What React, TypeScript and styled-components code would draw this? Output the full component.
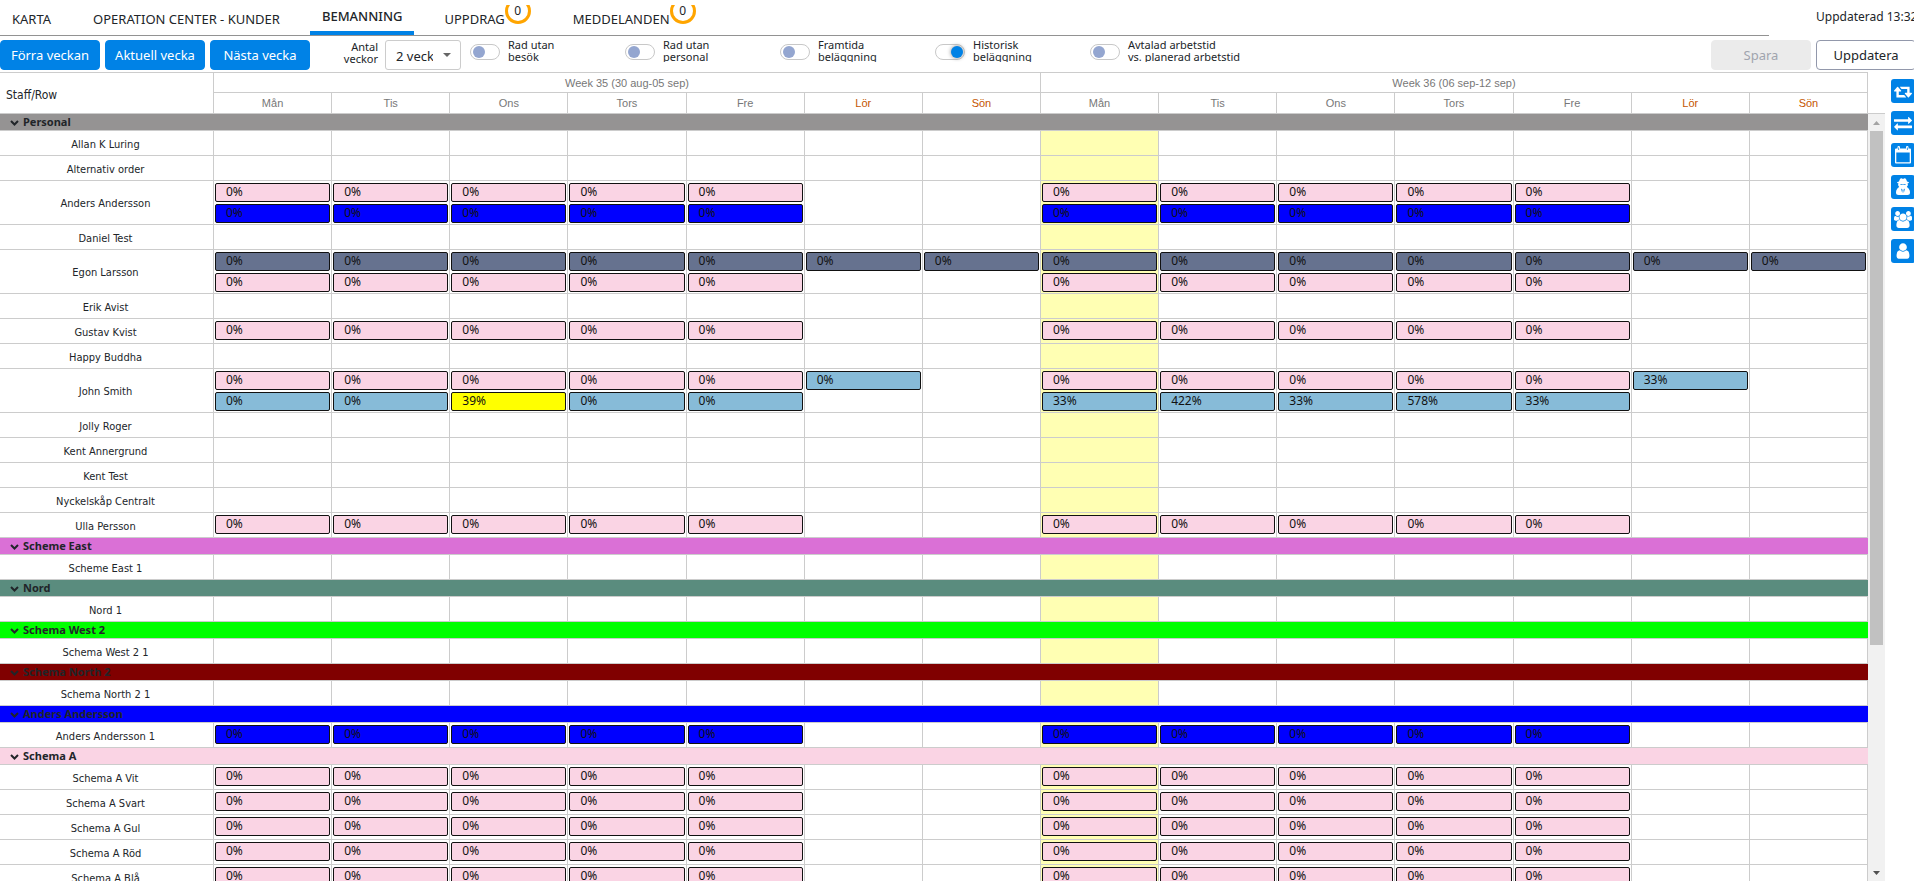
import React from 'react';
import styled, { createGlobalStyle, css } from 'styled-components';

const Global = createGlobalStyle`
  *, *::before, *::after { box-sizing: border-box; }
  html, body { margin: 0; height: 100%; background: #fff; overflow: hidden; }
  #root { height: 100%; }
  body, button, select, input { font-family: "Noto Sans", "Open Sans", sans-serif; color: #212529; }
`;

const Page = styled.div`
  height: 100vh;
  display: flex;
  flex-direction: column;
  overflow: hidden;
`;

const TopBar = styled.header`
  display: flex;
  justify-content: space-between;
  height: 36px;
  flex: none;
`;

const Tabs = styled.nav`
  display: flex;
  flex: 1;
  gap: 18px;
  margin-right: 47px;
  border-bottom: 1px solid #929292;
`;

const Tab = styled.a<{ $active?: boolean }>`
  display: flex;
  align-items: flex-start;
  height: 35px;
  padding: ${p => (p.$active ? '7px' : '10px')} 12px 0;
  border-bottom: ${p => (p.$active ? '4px solid #0082e6' : '0')};
  font-size: 13px;
  line-height: 18px;
  font-weight: ${p => (p.$active ? 500 : 400)};
  color: #212529;
  text-decoration: none;
  white-space: nowrap;
`;

const CounterClip = styled.span`
  display: flex;
  align-items: flex-end;
  height: 19px;
  margin-top: -5px;
  overflow: hidden;
`;

const Counter = styled.span`
  flex: none;
  width: 26px;
  height: 26px;
  border: 3px solid #ffa500;
  border-radius: 13px;
  font-size: 12px;
  line-height: 20px;
  text-align: center;
`;

const Updated = styled.div`
  width: 98px;
  padding-top: 8px;
  font-size: 12px;
  line-height: 18px;
  white-space: nowrap;
`;

const Toolbar = styled.div`
  display: flex;
  flex: none;
  height: 36px;
  padding-top: 4px;
  align-items: flex-start;
`;

const Button = styled.button<{ $kind: 'primary' | 'disabled' | 'outline' }>`
  flex: none;
  width: 100px;
  height: 30px;
  margin-right: 5px;
  padding: 0;
  border: 1px solid;
  border-radius: 4px;
  font-size: 13px;
  line-height: 20px;
  ${p => p.$kind === 'primary' && css`background: #0082e6; border-color: #0082e6; color: #fff;`}
  ${p => p.$kind === 'disabled' && css`background: #ebebeb; border-color: #ebebeb; color: #a0a4ae;`}
  ${p => p.$kind === 'outline' && css`background: #fff; border-color: #9298ab;`}
`;

const WeeksField = styled.label`
  display: flex;
  flex: none;
  align-items: flex-start;
  width: 155px;
  font-size: 11px;
  line-height: 12px;
  text-align: right;
`;

const WeeksText = styled.span`
  width: 63px;
  margin: 1px 7px 0 0;
  padding-left: 20px;
`;

const SelectBox = styled.span`
  position: relative;
  width: 76px;
  height: 30px;
  &::after {
    content: "";
    position: absolute;
    right: 10px;
    top: 13px;
    border: 4px solid transparent;
    border-top-color: #666;
    border-bottom: 0;
  }
`;

const Select = styled.select`
  appearance: none;
  width: 76px;
  height: 30px;
  padding: 2px 27px 0 10px;
  border: 1px solid #ccc;
  border-radius: 3px;
  background: #fff;
  font-size: 13px;
  text-overflow: clip;
`;

const ToggleField = styled.label`
  display: flex;
  flex: none;
  align-items: flex-start;
  width: 155px;
  height: 23px;
  margin-top: -1px;
  overflow: hidden;
  font-size: 11px;
  line-height: 12px;
  white-space: pre;
`;

const Toggle = styled.input`
  appearance: none;
  flex: none;
  width: 30px;
  height: 16px;
  margin: 5px 8px 0 0;
  border: 1px solid #c8c8c8;
  border-radius: 8px;
  background: #fff;
  display: flex;
  align-items: center;
  padding: 0 2px;
  &::before {
    content: "";
    width: 12px;
    height: 12px;
    border-radius: 6px;
    background: #94a6d0;
  }
  &:checked { justify-content: flex-end; padding: 0 1px; }
  &:checked::before { background: #0082e6; box-shadow: 0 0 4px #888; }
`;

const Actions = styled.div`
  display: flex;
  flex: none;
  width: 203px;
  margin-left: auto;
  overflow: hidden;
`;

const Body = styled.main`
  display: flex;
  flex: 1;
  min-height: 0;
  padding-bottom: 3px;
`;

const Schedule = styled.div`
  flex: 1;
  min-width: 0;
  overflow: hidden;
`;

const Grid = styled.table`
  width: 100%;
  table-layout: fixed;
  border-collapse: separate;
  border-spacing: 0;
  border-top: 1px solid #ccc;
  font-size: 11px;
  line-height: 16px;
`;

const LabelCol = styled.col`
  width: 214px;
`;

const HeadCell = styled.th<{ $h: number; $weekend?: boolean }>`
  height: ${p => p.$h}px;
  padding: 0;
  border-right: 1px solid #ccc;
  border-bottom: 1px solid #ccc;
  font-family: "Liberation Sans", sans-serif;
  font-weight: 400;
  color: ${p => (p.$weekend ? '#c45500' : '#777')};
`;

const Corner = styled.th`
  padding: 4px 6px 0;
  border-right: 1px solid #ccc;
  border-bottom: 1px solid #ccc;
  font-family: "DejaVu Sans Condensed", "Noto Sans", sans-serif;
  font-size: 12px;
  font-weight: 400;
  text-align: left;
`;

const GroupCell = styled.th<{ $color: string }>`
  height: 17px;
  padding: 0 0 0 10px;
  border-bottom: 1px solid #ccc;
  background: ${p => p.$color};
  font-weight: 700;
  line-height: 16px;
  text-align: left;
`;

const Chevron = styled.svg`
  width: 9px;
  height: 6px;
  margin-right: 4px;
`;

const NameCell = styled.th<{ $tall: boolean }>`
  height: ${p => (p.$tall ? 44 : 25)}px;
  padding: ${p => (p.$tall ? 2 : 4)}px 2px 0 0;
  border-right: 1px solid #ccc;
  border-bottom: 1px solid #ccc;
  font-family: "DejaVu Sans Condensed", "Noto Sans", sans-serif;
  font-weight: 400;
`;

const DayCell = styled.td<{ $today: boolean }>`
  padding: 0 1px;
  vertical-align: top;
  border-right: 1px solid #ccc;
  border-bottom: 1px solid #ccc;
  background: ${p => (p.$today ? '#ffffb3' : '#fff')};
`;

const Shift = styled.div<{ $color: string }>`
  height: 19px;
  margin-top: 2px;
  padding-left: 10px;
  border: 1px solid #111;
  border-radius: 2px;
  background: ${p => p.$color};
  color: #111;
  font-size: 12px;
  line-height: 16px;
`;

const ScrollTrack = styled.div`
  display: flex;
  flex: none;
  flex-direction: column;
  align-items: center;
  width: 17px;
  margin-top: 41px;
  border-top: 1px solid #ccc;
  background: #f1f1f1;
`;

const ScrollArrow = styled.svg`
  flex: none;
  width: 17px;
  height: 17px;
`;

const ScrollThumb = styled.div`
  width: 13px;
  height: 67%;
  margin-bottom: auto;
  background: #c1c1c1;
`;

const SideTools = styled.aside`
  display: flex;
  flex: none;
  flex-direction: column;
  gap: 8px;
  width: 29px;
  padding: 7px 0 0 6px;
  overflow: hidden;
`;

const SideButton = styled.button`
  display: flex;
  flex: none;
  align-items: center;
  justify-content: center;
  width: 24px;
  height: 24px;
  padding: 0;
  border: 0;
  border-radius: 3px;
  background: #0082e6;
`;

const PINK = '#fad4e4';
const BLUE = '#0000ff';
const SLATE = '#66728f';
const SKY = '#87bbd8';
const YELLOW = '#ffff00';

type Bar = { color: string; text: string } | null;
type Person = { name: string; lines: Bar[][] };
type Group = { name: string; color: string; people: Person[] };

const week = (color: string, texts: string[]): Bar[] =>
  Array.from({ length: 7 }, (_, i) => (texts[i] ? { color, text: texts[i] } : null));
const zeros = (n: number) => Array<string>(n).fill('0%');
const both = (color: string, days = 5) => [...week(color, zeros(days)), ...week(color, zeros(days))];

const johnTop = both(PINK);
johnTop[5] = { color: SKY, text: '0%' };
johnTop[12] = { color: SKY, text: '33%' };
const johnBottom = [...week(SKY, ['0%', '0%', '39%', '0%', '0%']), ...week(SKY, ['33%', '422%', '33%', '578%', '33%'])];
johnBottom[2] = { color: YELLOW, text: '39%' };

const plain = (name: string): Person => ({ name, lines: [] });
const pink = (name: string): Person => ({ name, lines: [both(PINK)] });

const groups: Group[] = [
  {
    name: 'Personal',
    color: '#959393',
    people: [
      plain('Allan K Luring'),
      plain('Alternativ order'),
      { name: 'Anders Andersson', lines: [both(PINK), both(BLUE)] },
      plain('Daniel Test'),
      { name: 'Egon Larsson', lines: [both(SLATE, 7), both(PINK)] },
      plain('Erik Avist'),
      pink('Gustav Kvist'),
      plain('Happy Buddha'),
      { name: 'John Smith', lines: [johnTop, johnBottom] },
      plain('Jolly Roger'),
      plain('Kent Annergrund'),
      plain('Kent Test'),
      plain('Nyckelskåp Centralt'),
      pink('Ulla Persson'),
    ],
  },
  { name: 'Scheme East', color: '#da70d6', people: [plain('Scheme East 1')] },
  { name: 'Nord', color: '#5a8c7e', people: [plain('Nord 1')] },
  { name: 'Schema West 2', color: '#00ff00', people: [plain('Schema West 2 1')] },
  { name: 'Schema North 2', color: '#800000', people: [plain('Schema North 2 1')] },
  { name: 'Anders Andersson', color: BLUE, people: [{ name: 'Anders Andersson 1', lines: [both(BLUE)] }] },
  {
    name: 'Schema A',
    color: PINK,
    people: ['Vit', 'Svart', 'Gul', 'Röd', 'Blå'].map(c => pink('Schema A ' + c)),
  },
];

const dayNames = ['Mån', 'Tis', 'Ons', 'Tors', 'Fre', 'Lör', 'Sön'];
const TODAY = 7;

const toggles = [
  { text: 'Rad utan\nbesök', on: false },
  { text: 'Rad utan\npersonal', on: false },
  { text: 'Framtida\nbeläggning', on: false },
  { text: 'Historisk\nbeläggning', on: true },
  { text: 'Avtalad arbetstid\nvs. planerad arbetstid', on: false },
];

const sideIcons: { label: string; box: string; w: number; h: number; path: string }[] = [
  {
    label: 'Upprepa',
    box: '0 0 1920 1792',
    w: 18,
    h: 17,
    path: 'M1280 1504q0 13-9.5 22.5t-22.5 9.5h-960q-8 0-13.5-2t-9-7-5.5-8-3-11.5-1-11.5v-600h-192q-26 0-45-19t-19-45q0-24 15-41l320-384q19-22 49-22t49 22l320 384q15 17 15 41 0 26-19 45t-45 19h-192v384h576q16 0 25 11l160 192q7 10 7 21zm640-416q0 24-15 41l-320 384q-20 23-49 23t-49-23l-320-384q-15-17-15-41 0-26 19-45t45-19h192v-384h-576q-16 0-25-12l-160-192q-7-9-7-20 0-13 9.5-22.5t22.5-9.5h960q8 0 13.5 2t9 7 5.5 8 3 11.5 1 11.5v600h192q26 0 45 19t19 45z',
  },
  {
    label: 'Byt',
    box: '0 0 1792 1792',
    w: 18,
    h: 18,
    path: 'M1792 1184v192q0 13-9.5 22.5t-22.5 9.5h-1376v192q0 13-9.5 22.5t-22.5 9.5q-12 0-24-10l-319-320q-9-9-9-22 0-14 9-23l320-320q9-9 23-9 13 0 22.5 9.5t9.5 22.5v192h1376q13 0 22.5 9.5t9.5 22.5zm0-544q0 14-9 23l-320 320q-9 9-23 9-13 0-22.5-9.5t-9.5-22.5v-192h-1376q-13 0-22.5-9.5t-9.5-22.5v-192q0-13 9.5-22.5t22.5-9.5h1376v-192q0-14 9-23t23-9q12 0 24 10l319 319q9 9 9 23z',
  },
  {
    label: 'Kalender',
    box: '0 0 18 18',
    w: 18,
    h: 18,
    path: 'M2 2.500h1.500V1q0-1 1.200-1T6 1v1.500h6V1q0-1 1.200-1t1.300 1v1.500H16q1 0 1 1V16.500q0 1-1 1H2q-1 0-1-1V3.500q0-1 1-1zM2.300 6.500v9.700h13.400V6.500zM4.300 1.500v2.500h.8V1.500zm8.600 0v2.500h.8V1.500z',
  },
  {
    label: 'Sekreterare',
    box: '0 0 18 18',
    w: 18,
    h: 18,
    path: 'M6.500.5Q7.500 0 9 1 10.500 0 11.500.5 12.500 1.500 13 3.500 15 4 15 4.500 15 5.200 13.500 5.500L14 7 12.800 9Q16 11 16 14.500 16 17 13.500 17H4.500Q2 17 2 14.500 2 11 5.200 9L4 7 4.500 5.500Q3 5.200 3 4.500 3 4 5 3.500 5.500 1.500 6.500.5zM6.200 6.300q1 1 2.300.2h1q1.300.8 2.300-.2v-.4H6.200zM7 10.500l1.200 4.500.4-3.200zm4 0-1.200 4.500-.4-3.200z',
  },
  {
    label: 'Grupp',
    box: '0 0 1920 1792',
    w: 18,
    h: 17,
    path: 'M593 896q-162 5-265 128h-134q-82 0-138-40.5t-56-118.5q0-353 124-353 6 0 43.5 21t97.5 42.5 119 21.5q67 0 133-23-5 37-5 66 0 159 93 283zm1071 637q0 120-73 189.5t-194 69.5h-874q-121 0-194-69.5t-73-189.5q0-53 3.500-103.500t14-109 26.500-108.500 43-97.500 62-81 85.500-53.500 111.500-20q10 0 43 21.500t73 48 107 48 135 21.500 135-21.500 107-48 73-48 43-21.500q61 0 111.500 20t85.500 53.500 62 81 43 97.500 26.500 108.500 14 109 3.500 103.500zm-1024-1277q0 106-75 181t-181 75-181-75-75-181 75-181 181-75 181 75 75 181zm704 384q0 159-112.500 271.500t-271.500 112.500-271.500-112.500-112.500-271.500 112.500-271.500 271.500-112.500 271.500 112.500 112.500 271.500zm576 225q0 78-56 118.500t-138 40.500h-134q-103-123-265-128 93-124 93-283 0-29-5-66 66 23 133 23 59 0 119-21.500t97.500-42.500 43.500-21q124 0 124 353zm-128-609q0 106-75 181t-181 75-181-75-75-181 75-181 181-75 181 75 75 181z',
  },
  {
    label: 'Person',
    box: '0 0 1792 1792',
    w: 18,
    h: 18,
    path: 'M1536 1399q0 109-62.500 187t-150.500 78h-854q-88 0-150.500-78t-62.500-187q0-85 8.500-160.500t31.500-152 58.500-131 94-89 134.500-34.500q131 128 313 128t313-128q76 0 134.500 34.500t94 89 58.500 131 31.500 152 8.500 160.500zm-256-887q0 159-112.500 271.500t-271.500 112.500-271.500-112.500-112.500-271.500 112.500-271.500 271.500-112.500 271.500 112.500 112.500 271.500z',
  },
];

export default function App() {
  return (
    <>
      <Global />
      <Page>
        <TopBar>
          <Tabs>
            <Tab href="#karta">KARTA</Tab>
            <Tab href="#kunder">OPERATION CENTER - KUNDER</Tab>
            <Tab href="#bemanning" $active>BEMANNING</Tab>
            <Tab href="#uppdrag">UPPDRAG<CounterClip><Counter>0</Counter></CounterClip></Tab>
            <Tab href="#meddelanden">MEDDELANDEN<CounterClip><Counter>0</Counter></CounterClip></Tab>
          </Tabs>
          <Updated>Uppdaterad 13:32</Updated>
        </TopBar>
        <Toolbar>
          <Button $kind="primary">Förra veckan</Button>
          <Button $kind="primary">Aktuell vecka</Button>
          <Button $kind="primary">Nästa vecka</Button>
          <WeeksField>
            <WeeksText>Antal veckor</WeeksText>
            <SelectBox>
              <Select defaultValue="2">
                <option value="2">2 veckor</option>
              </Select>
            </SelectBox>
          </WeeksField>
          {toggles.map(t => (
            <ToggleField key={t.text}>
              <Toggle type="checkbox" defaultChecked={t.on} />
              {t.text}
            </ToggleField>
          ))}
          <Actions>
            <Button $kind="disabled" disabled>Spara</Button>
            <Button $kind="outline">Uppdatera</Button>
          </Actions>
        </Toolbar>
        <Body>
          <Schedule>
            <Grid>
              <colgroup>
                <LabelCol />
                {Array.from({ length: 14 }, (_, i) => <col key={i} />)}
              </colgroup>
              <thead>
                <tr>
                  <Corner rowSpan={2}>Staff/Row</Corner>
                  <HeadCell $h={20} colSpan={7}>Week 35 (30 aug-05 sep)</HeadCell>
                  <HeadCell $h={20} colSpan={7}>Week 36 (06 sep-12 sep)</HeadCell>
                </tr>
                <tr>
                  {[...dayNames, ...dayNames].map((d, i) => (
                    <HeadCell key={i} $h={21} $weekend={i % 7 > 4}>{d}</HeadCell>
                  ))}
                </tr>
              </thead>
              {groups.map(g => (
                <tbody key={g.name}>
                  <tr>
                    <GroupCell $color={g.color} colSpan={15}>
                      <Chevron viewBox="0 0 9 6">
                        <path d="M1 1l3.500 3.500L8 1" fill="none" stroke="#212529" strokeWidth="2" />
                      </Chevron>
                      {g.name}
                    </GroupCell>
                  </tr>
                  {g.people.map(p => (
                    <tr key={p.name}>
                      <NameCell scope="row" $tall={p.lines.length > 1}>{p.name}</NameCell>
                      {Array.from({ length: 14 }, (_, day) => (
                        <DayCell key={day} $today={day === TODAY}>
                          {p.lines.map((line, n) => {
                            const bar = line[day];
                            return bar && <Shift key={n} $color={bar.color}>{bar.text}</Shift>;
                          })}
                        </DayCell>
                      ))}
                    </tr>
                  ))}
                </tbody>
              ))}
            </Grid>
          </Schedule>
          <ScrollTrack>
            <ScrollArrow viewBox="0 0 17 17"><path d="M5 11h7L8.500 7z" fill="#a3a3a3" /></ScrollArrow>
            <ScrollThumb />
            <ScrollArrow viewBox="0 0 17 17"><path d="M5 7h7L8.500 11z" fill="#505050" /></ScrollArrow>
          </ScrollTrack>
          <SideTools>
            {sideIcons.map(s => (
              <SideButton key={s.label} aria-label={s.label}>
                <svg width={s.w} height={s.h} viewBox={s.box} fill="#fff">
                  <path fillRule="evenodd" d={s.path} />
                </svg>
              </SideButton>
            ))}
          </SideTools>
        </Body>
      </Page>
    </>
  );
}
